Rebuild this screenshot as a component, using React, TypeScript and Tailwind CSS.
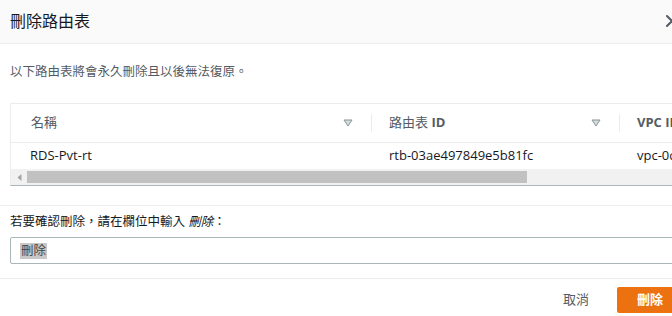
import React from "react";

const font = '"Open Sans", "Noto Sans CJK TC", sans-serif';

function Tri() {
  return (
    <svg width="10" height="8" viewBox="0 0 10 8">
      <polygon points="1,1 9,1 5,7" fill="#d5dbdb" stroke="#879596" strokeWidth="1" strokeLinejoin="round" />
    </svg>
  );
}

export default function App() {
  return (
    <div className="w-[672px] h-[316px] overflow-hidden bg-white" style={{ fontFamily: font }}>
      <div className="w-[693px]">
        <div className="h-[44px] bg-[#fafafa] border-b border-[#eaeded] flex items-center justify-between pl-[10px] pr-[14px]">
          <div className="text-[16px] leading-[20px] text-[#16191f] pb-[1px]">刪除路由表</div>
          <svg width="14" height="14" viewBox="0 0 14 14" className="mb-[2px]">
            <path d="M2 2 L12 12 M12 2 L2 12" stroke="#545b64" strokeWidth="2" strokeLinecap="round" />
          </svg>
        </div>
        <div className="px-[10px]">
          <p className="mt-[18px] text-[12.5px] leading-[20px] text-[#545b64]">以下路由表將會永久刪除且以後無法復原。</p>
          <div className="mt-[21px] border border-[#eaeded] border-b-[#aab7b8] overflow-hidden">
            <div className="h-[39px] flex items-center border-b border-[#eaeded] text-[13px] text-[#545b64]">
              <div className="w-[360px] shrink-0 flex items-center justify-between pl-[20px] pr-[18px]">
                <span>名稱</span>
                <Tri />
              </div>
              <div className="w-px shrink-0 h-[18px] bg-[#eaeded]" />
              <div className="w-[247px] shrink-0 flex items-center justify-between pl-[17px] pr-[18px]">
                <span>路由表 <span className="font-bold">ID</span></span>
                <Tri />
              </div>
              <div className="w-px shrink-0 h-[18px] bg-[#eaeded]" />
              <div className="pl-[17px] shrink-0 font-bold whitespace-nowrap">VPC ID</div>
            </div>
            <div className="h-[26px] flex items-center text-[13px] text-[#16191f]">
              <div className="w-[361px] shrink-0 pl-[19px]">RDS-Pvt-rt</div>
              <div className="w-[248px] shrink-0 pl-[17px]">rtb-03ae497849e5b81fc</div>
              <div className="pl-[17px] shrink-0 whitespace-nowrap">vpc-0c</div>
            </div>
            <div className="h-[16px] bg-[#f1f1f1] flex items-center">
              <div className="w-[16px] shrink-0 flex justify-center">
                <svg width="5" height="7" viewBox="0 0 5 7">
                  <polygon points="4.5,0 4.5,7 0.5,3.5" fill="#a3a3a3" />
                </svg>
              </div>
              <div className="w-[500px] shrink-0 h-[12px] bg-[#c1c1c1]" />
            </div>
          </div>
        </div>
        <div className="mt-[19px] border-t border-[#eaeded] px-[10px] pt-[8px] pb-[14px]">
          <div className="text-[12.5px] leading-[16px] text-[#16191f]">
            若要確認刪除，請在欄位中輸入 <i>刪除</i>：
          </div>
          <div className="mt-[7px] h-[27px] border border-[#aab7b8] rounded-[2px] flex items-center pl-[9px]">
            <span className="bg-[#c8c8c8] text-[12.5px] leading-[16px] text-[#444] px-px">刪除</span>
          </div>
        </div>
        <div className="border-t border-[#eaeded] pt-[8px] flex justify-end items-center pr-[10px]">
          <button className="h-[26px] px-[20px] text-[13px] text-[#545b64] mr-[8px]">取消</button>
          <button className="h-[26px] px-[20px] text-[13px] font-bold text-white bg-[#ec7211] rounded-[2px]">刪除</button>
        </div>
      </div>
    </div>
  );
}
